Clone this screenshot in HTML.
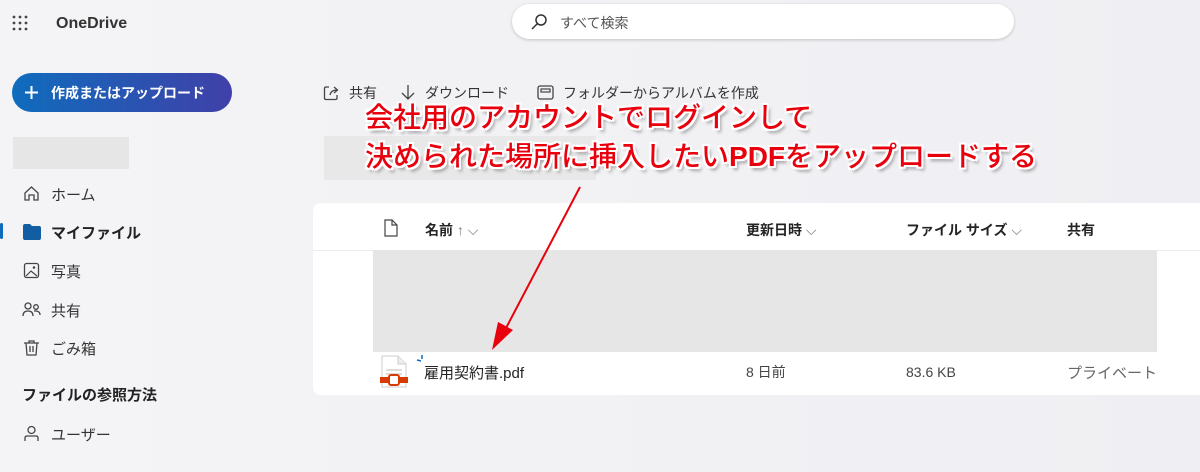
<!DOCTYPE html>
<html><head><meta charset="utf-8"><style>
*{margin:0;padding:0;box-sizing:border-box}
body{width:1200px;height:472px;overflow:hidden;background:linear-gradient(90deg,#f4f4f6,#efeff3);font-family:"Liberation Sans","Noto Sans CJK JP",sans-serif;color:#242424;position:relative}
.a{position:absolute;white-space:nowrap}
.nav{font-size:15px;color:#333}
.big{font-size:28px;color:#e8000d;font-weight:500;text-shadow:-2px -2px 0 #fff,2px -2px 0 #fff,-2px 2px 0 #fff,2px 2px 0 #fff,0 2px 0 #fff,0 -2px 0 #fff,2px 0 0 #fff,-2px 0 0 #fff,3px 4px 3px rgba(0,0,0,.35)}
</style></head><body>
<svg class="a" style="left:12px;top:15px" width="18" height="18"><g fill="#444"><circle cx="2" cy="2" r="1.4"/><circle cx="8" cy="2" r="1.4"/><circle cx="14" cy="2" r="1.4"/><circle cx="2" cy="8" r="1.4"/><circle cx="8" cy="8" r="1.4"/><circle cx="14" cy="8" r="1.4"/><circle cx="2" cy="14" r="1.4"/><circle cx="8" cy="14" r="1.4"/><circle cx="14" cy="14" r="1.4"/></g></svg>
<div class="a" style="left:56px;top:15px;font-size:16px;font-weight:bold;color:#333">OneDrive</div>
<div class="a" style="left:512px;top:4px;width:502px;height:35px;background:#fff;border-radius:18px;box-shadow:0 1px 3px rgba(0,0,0,.2)"></div>
<svg class="a" style="left:530px;top:13px" width="18" height="18"><circle cx="11" cy="7" r="5" fill="none" stroke="#333" stroke-width="1.5"/><path d="M7.5 10.5L2 16" stroke="#333" stroke-width="1.5"/></svg>
<div class="a" style="left:560px;top:13px;font-size:14px;color:#555">すべて検索</div>
<div class="a" style="left:12px;top:73px;width:220px;height:39px;border-radius:20px;background:linear-gradient(90deg,#0f6cbd,#4040a8)"></div>
<svg class="a" style="left:24px;top:85px" width="15" height="15"><path d="M7.5 1V14M1 7.5H14" stroke="#fff" stroke-width="2"/></svg>
<div class="a" style="left:51px;top:83px;font-size:14px;color:#fff;font-weight:bold">作成またはアップロード</div>
<div class="a" style="left:13px;top:137px;width:116px;height:32px;background:#e6e6e6"></div>
<svg class="a" style="left:23px;top:185px" width="17" height="17"><path d="M2 8L8.5 2L15 8V15H11V10H6V15H2Z" fill="none" stroke="#444" stroke-width="1.3"/></svg>
<div class="a nav" style="left:51px;top:184px">ホーム</div>
<div class="a" style="left:0;top:223px;width:3px;height:16px;background:#0f6cbd;border-radius:2px"></div>
<svg class="a" style="left:23px;top:224px" width="18" height="16"><path d="M0 2Q0 0 2 0H7L9 2H16Q18 2 18 4V14Q18 16 16 16H2Q0 16 0 14Z" fill="#115ea3"/></svg>
<div class="a nav" style="left:51px;top:222px;font-weight:bold;color:#222">マイファイル</div>
<svg class="a" style="left:23px;top:262px" width="17" height="17"><rect x="1.5" y="1.5" width="14" height="14" rx="2" fill="none" stroke="#444" stroke-width="1.3"/><path d="M3 14L8 9L14 14" fill="none" stroke="#444" stroke-width="1.2"/><circle cx="11" cy="5.5" r="1.3" fill="#444"/></svg>
<div class="a nav" style="left:51px;top:261px">写真</div>
<svg class="a" style="left:22px;top:301px" width="20" height="17"><circle cx="6" cy="5" r="3" fill="none" stroke="#444" stroke-width="1.3"/><circle cx="14" cy="6" r="2.3" fill="none" stroke="#444" stroke-width="1.3"/><path d="M1 15Q1 10 6 10Q11 10 11 15M12 10Q18 9.5 18 14" fill="none" stroke="#444" stroke-width="1.3"/></svg>
<div class="a nav" style="left:51px;top:300px">共有</div>
<svg class="a" style="left:23px;top:339px" width="17" height="18"><path d="M1 4H16M6 4V2H11V4M3 4L4 16H13L14 4M7 7V13M10 7V13" fill="none" stroke="#444" stroke-width="1.3"/></svg>
<div class="a nav" style="left:51px;top:338px">ごみ箱</div>
<div class="a" style="left:22px;top:384px;font-size:15px;font-weight:bold;color:#222">ファイルの参照方法</div>
<svg class="a" style="left:23px;top:425px" width="17" height="17"><circle cx="8.5" cy="5" r="3.5" fill="none" stroke="#444" stroke-width="1.3"/><path d="M2 16V13Q2 11 4 11H13Q15 11 15 13V16" fill="none" stroke="#444" stroke-width="1.3"/></svg>
<div class="a nav" style="left:51px;top:424px">ユーザー</div>
<svg class="a" style="left:323px;top:84px" width="17" height="17"><path d="M6 3H3Q1.5 3 1.5 4.5V14Q1.5 15.5 3 15.5H12.5Q14 15.5 14 14V11M7 11Q8 6 14 6M11 3L14.5 6L11 9" fill="none" stroke="#444" stroke-width="1.3"/></svg>
<div class="a nav" style="left:349px;top:83px;font-size:14px">共有</div>
<svg class="a" style="left:400px;top:84px" width="16" height="18"><path d="M8 1V15M2 9L8 15L14 9" fill="none" stroke="#444" stroke-width="1.3"/></svg>
<div class="a nav" style="left:425px;top:83px;font-size:14px">ダウンロード</div>
<svg class="a" style="left:537px;top:85px" width="17" height="15"><rect x="1" y="1" width="15" height="13" rx="2" fill="none" stroke="#444" stroke-width="1.3"/><rect x="4" y="4" width="9" height="3" fill="none" stroke="#444" stroke-width="1.2"/></svg>
<div class="a nav" style="left:563px;top:83px;font-size:14px">フォルダーからアルバムを作成</div>
<div class="a" style="left:324px;top:136px;width:272px;height:44px;background:#e8e8e8"></div>
<div class="a" style="left:313px;top:203px;width:900px;height:192px;background:#fff;border-radius:8px 0 0 8px"></div>
<svg class="a" style="left:384px;top:219px" width="14" height="18"><path d="M1 1H8L13 6V17H1Z M8 1V6H13" fill="none" stroke="#444" stroke-width="1.2"/></svg>
<div class="a" style="left:425px;top:220px;font-size:14px;font-weight:bold">名前 <span style="font-weight:normal;color:#777">↑ ⌵</span></div>
<div class="a" style="left:746px;top:220px;font-size:14px;font-weight:bold">更新日時 <span style="font-weight:normal;color:#777">⌵</span></div>
<div class="a" style="left:906px;top:220px;font-size:14px;font-weight:bold">ファイル サイズ <span style="font-weight:normal;color:#777">⌵</span></div>
<div class="a" style="left:1067px;top:220px;font-size:14px;font-weight:bold">共有</div>
<div class="a" style="left:313px;top:250px;width:887px;height:1px;background:#ececec"></div>
<div class="a" style="left:373px;top:250px;width:784px;height:102px;background:#e6e6e6"></div>
<svg class="a" style="left:379px;top:355px" width="30" height="34"><path d="M3 1H19L27 9V32H3Z" fill="#fff" stroke="#ccc"/><path d="M19 1V9H27" fill="#eee" stroke="#ccc"/><rect x="7" y="14" width="16" height="2" fill="#ddd"/><rect x="7" y="18" width="16" height="2" fill="#ddd"/><rect x="1" y="22" width="28" height="6" fill="#d83b01"/><rect x="10" y="20" width="10" height="10" rx="2" fill="#fff" stroke="#d83b01" stroke-width="2"/></svg>
<svg class="a" style="left:415px;top:354px" width="12" height="12"><path d="M2 6L6 7M7 1V5" stroke="#0f6cbd" stroke-width="1.5"/></svg>
<div class="a" style="left:424px;top:362px;font-size:15px">雇用契約書.pdf</div>
<div class="a" style="left:746px;top:362px;font-size:14px;color:#444">8 日前</div>
<div class="a" style="left:906px;top:364px;font-size:14px;color:#444">83.6 KB</div>
<div class="a" style="left:1067px;top:362px;font-size:15px;color:#666">プライベート</div>
<svg class="a" style="left:0;top:0" width="1200" height="472"><line x1="580" y1="187" x2="505" y2="330" stroke="#e8000d" stroke-width="2"/><path d="M492 350L498 322L513 330Z" fill="#e8000d"/></svg>
<div class="a big" style="left:365px;top:96px">会社用のアカウントでログインして</div>
<div class="a big" style="left:365px;top:135px">決められた場所に挿入したい<b>PDF</b>をアップロードする</div>
</body></html>
